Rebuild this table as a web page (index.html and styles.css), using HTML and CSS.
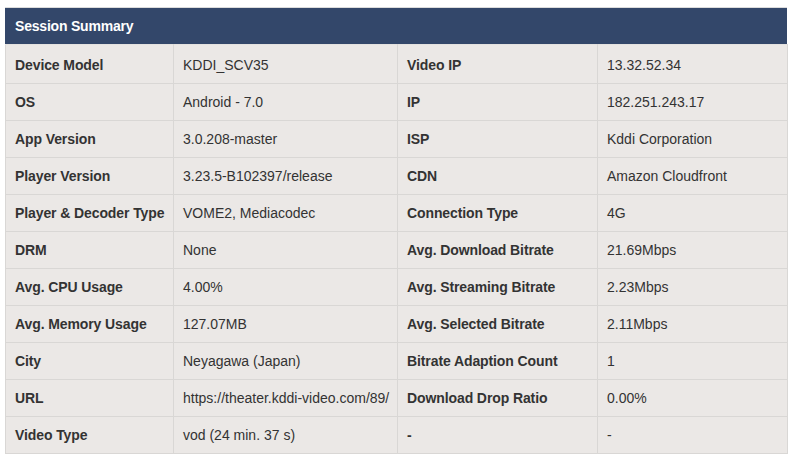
FILE: index.html
```html
<!DOCTYPE html>
<html>
<head>
<meta charset="utf-8">
<link rel="stylesheet" href="styles.css">
</head>
<body>
<div class="panel">
  <div class="panel-head">Session Summary</div>
  <table class="summary">
    <colgroup>
      <col class="c1"><col class="c2"><col class="c3"><col class="c4">
    </colgroup>
    <tbody>
      <tr class="first"><th>Device Model</th><td>KDDI_SCV35</td><th>Video IP</th><td>13.32.52.34</td></tr>
      <tr><th>OS</th><td>Android - 7.0</td><th>IP</th><td>182.251.243.17</td></tr>
      <tr><th>App Version</th><td>3.0.208-master</td><th>ISP</th><td>Kddi Corporation</td></tr>
      <tr><th>Player Version</th><td>3.23.5-B102397/release</td><th>CDN</th><td>Amazon Cloudfront</td></tr>
      <tr><th>Player &amp; Decoder Type</th><td>VOME2, Mediacodec</td><th>Connection Type</th><td>4G</td></tr>
      <tr><th>DRM</th><td>None</td><th>Avg. Download Bitrate</th><td>21.69Mbps</td></tr>
      <tr><th>Avg. CPU Usage</th><td>4.00%</td><th>Avg. Streaming Bitrate</th><td>2.23Mbps</td></tr>
      <tr><th>Avg. Memory Usage</th><td>127.07MB</td><th>Avg. Selected Bitrate</th><td>2.11Mbps</td></tr>
      <tr><th>City</th><td>Neyagawa (Japan)</td><th>Bitrate Adaption Count</th><td>1</td></tr>
      <tr><th>URL</th><td>https://theater.kddi-video.com/89/</td><th>Download Drop Ratio</th><td>0.00%</td></tr>
      <tr><th>Video Type</th><td>vod (24 min. 37 s)</td><th>-</th><td>-</td></tr>
    </tbody>
  </table>
</div>
</body>
</html>
```

FILE: styles.css
```css
html, body {
  margin: 0;
  padding: 0;
  background: #ffffff;
}
body {
  padding: 7px 1px 0 5px;
  font-family: "Liberation Sans", Arial, Helvetica, sans-serif;
  color: #333333;
}
.panel {
  width: 782px;
  border-top: 1px solid #dcdcdc;
}
.panel-head {
  background: #33476a;
  color: #ffffff;
  font-weight: bold;
  font-size: 14px;
  height: 36px;
  line-height: 36px;
  padding-left: 10px;
  letter-spacing: -0.2px;
}
.summary {
  width: 782px;
  table-layout: fixed;
  border-collapse: collapse;
  background: #ebe8e6;
  font-size: 14px;
}
.c1 { width: 168px; }
.c2 { width: 224px; }
.c3 { width: 200px; }
.c4 { width: 190px; }
.summary th,
.summary td {
  height: 36px;
  padding: 0 0 0 9px;
  border: 1px solid #d9d7d5;
  text-align: left;
  vertical-align: middle;
  white-space: nowrap;
  overflow: hidden;
}
.summary th {
  font-weight: bold;
  letter-spacing: -0.1px;
}
.summary td {
  font-weight: normal;
}
.summary .first th,
.summary .first td {
  height: 37px;
  padding-top: 1px;
  border-top: 1px solid #e4e2e0;
}
```
